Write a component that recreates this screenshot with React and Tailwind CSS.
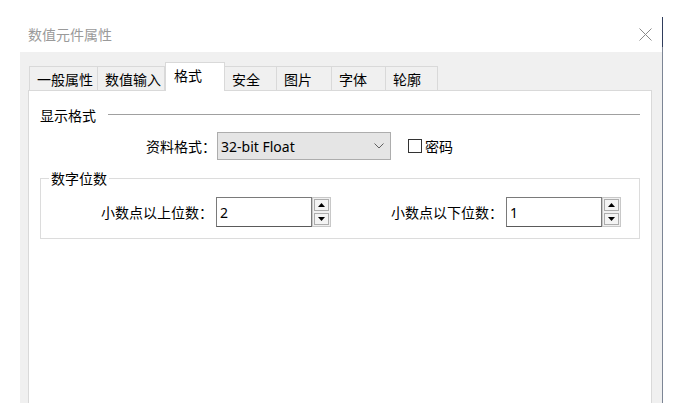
import React, { useState } from 'react';

const cjk = { fontFamily: "'Noto Sans CJK SC', 'Noto Sans', sans-serif" };
const latin = { fontFamily: "'Noto Sans', 'Noto Sans CJK SC', sans-serif" };

const tabs = [
  { label: '一般属性', w: 'w-[69px]' },
  { label: '数值输入', w: 'w-[68px]' },
  { label: '格式', w: 'w-[60px]' },
  { label: '安全', w: 'w-[53px]' },
  { label: '图片', w: 'w-[56px]' },
  { label: '字体', w: 'w-[55px]' },
  { label: '轮廓', w: 'w-[53px]' },
];

const Spinner = () => (
  <div className="w-[19px] h-[30px] border border-[#c8c8c8] bg-[#f0f0f0] flex flex-col justify-center items-center gap-[2px]">
    <div className="w-[15px] h-[12px] border border-[#adadad] bg-[#f4f4f4] flex items-center justify-center">
      <svg width="7" height="4" viewBox="0 0 7 4"><path d="M3.5 0 L7 4 L0 4 Z" fill="#000" /></svg>
    </div>
    <div className="w-[15px] h-[12px] border border-[#adadad] bg-[#f4f4f4] flex items-center justify-center">
      <svg width="7" height="4" viewBox="0 0 7 4"><path d="M0 0 L7 0 L3.5 4 Z" fill="#000" /></svg>
    </div>
  </div>
);

const NumberField = ({ value, w }) => (
  <div className="flex items-center">
    <div className={`${w} h-[30px] border border-[#7a7a7a] border-b-[#5a5a5a] bg-white flex items-center pl-[3px] text-[14px] text-black`} style={latin}>
      {value}
    </div>
    <Spinner />
  </div>
);

const App = () => {
  const [active, setActive] = useState(2);
  const [password, setPassword] = useState(false);

  return (
    <div className="w-[688px] h-[403px] bg-white flex overflow-hidden text-black" style={cjk}>
      <div className="w-[662px] flex flex-col">
        {/* Title bar */}
        <div className="h-[52px] shrink-0 flex items-start justify-between pl-[28px] pr-[10px] pt-[25px]">
          <span className="text-[14px] leading-[18px] text-[#9a9a9a]">数值元件属性</span>
          <svg width="13" height="13" viewBox="0 0 13 13" className="mt-[3px]">
            <path d="M0.5 0.5 L12.5 12.5 M12.5 0.5 L0.5 12.5" stroke="#8a8a8a" strokeWidth="1" />
          </svg>
        </div>

        {/* Dialog body */}
        <div className="ml-[20px] flex-1 bg-[#f0f0f0] pt-[10px] pl-[8px] pr-[10px]">
          <div className="flex items-end h-[28px] pl-px">
            {tabs.map((t, i) =>
              i === active ? (
                <button
                  key={t.label}
                  onClick={() => setActive(i)}
                  className={`${t.w} h-[29px] -mb-px relative z-10 bg-white border border-[#d9d9d9] border-b-0 flex justify-start pl-[8px] pt-[3px] text-[14px] leading-[18px]`}
                >
                  {t.label}
                </button>
              ) : (
                <button
                  key={t.label}
                  onClick={() => setActive(i)}
                  className={`${t.w} h-[24px] bg-[#f0f0f0] border border-[#d9d9d9] border-b-0 -ml-px first:ml-0 flex items-center justify-start pl-[7px] text-[14px] leading-[18px]`}
                >
                  {t.label}
                </button>
              )
            )}
          </div>

          <div className="h-[320px] bg-white border border-[#d9d9d9] px-[11px] pt-[15px]">
            {/* 显示格式 */}
            <div className="flex items-center h-[18px]">
              <span className="text-[14px] leading-[18px]">显示格式</span>
              <div className="flex-1 ml-[12px] flex flex-col">
                <div className="h-px bg-[#a0a0a0]" />
                <div className="h-px bg-white" />
              </div>
            </div>

            <div className="flex items-center mt-[8px] h-[28px]">
              <span className="w-[176px] text-right text-[14px] leading-[18px]">资料格式：</span>
              <div className="ml-[1px] w-[174px] h-[28px] bg-[#e5e5e5] border border-[#adadad] flex items-center justify-between pl-[3px] pr-[6px]">
                <span className="text-[14px]" style={latin}>32-bit Float</span>
                <svg width="10" height="6" viewBox="0 0 10 6">
                  <path d="M0.5 0.5 L5 5 L9.5 0.5" fill="none" stroke="#606060" strokeWidth="1" />
                </svg>
              </div>
              <label className="ml-[17px] flex items-center gap-[3px] cursor-pointer">
                <span
                  onClick={() => setPassword(!password)}
                  className="w-[14px] h-[14px] border border-[#333] bg-white flex items-center justify-center"
                >
                  {password && (
                    <svg width="10" height="8" viewBox="0 0 10 8"><path d="M1 4 L4 7 L9 1" fill="none" stroke="#000" strokeWidth="1.3" /></svg>
                  )}
                </span>
                <span className="text-[14px] leading-[18px]">密码</span>
              </label>
            </div>

            {/* 数字位数 */}
            <fieldset className="mt-[9px] border border-[#dcdcdc] pb-[11px] pt-[10px]">
              <legend className="ml-[8px] px-[2px] text-[14px] leading-[18px]">数字位数</legend>
              <div className="flex items-center">
                <span className="w-[172px] text-right text-[14px] leading-[18px]">小数点以上位数：</span>
                <div className="ml-[3px]">
                  <NumberField value="2" w="w-[96px]" />
                </div>
                <span className="ml-[60px] w-[112px] text-right text-[14px] leading-[18px]">小数点以下位数：</span>
                <div className="ml-[3px]">
                  <NumberField value="1" w="w-[96px]" />
                </div>
              </div>
            </fieldset>
          </div>
        </div>
      </div>

      {/* window edge */}
      <div className="w-px mt-[17px] flex flex-col">
        <div className="h-[30px] bg-[#2f3d5c]" />
        <div className="flex-1 bg-[#7c8595]" />
      </div>
      <div className="flex-1 bg-white" />
    </div>
  );
};

export default App;
